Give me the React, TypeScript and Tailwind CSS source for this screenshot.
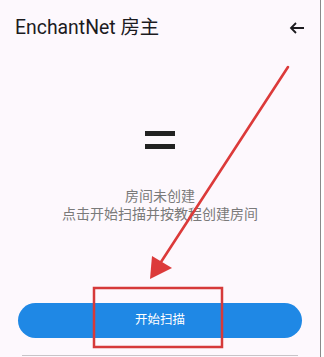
import React from "react";

export default function App() {
  return (
    <div className="relative w-[324px] h-[357px] overflow-hidden bg-white flex" style={{ fontFamily: 'Roboto, "Noto Sans CJK SC", sans-serif' }}>
      <div className="w-[321px] h-full bg-[#fdf8fd] border-r border-[#8a8a8a] flex flex-col">
        <div className="h-[56px] flex items-center justify-between pl-[15px] pr-[15px]">
          <span className="text-[19.4px] leading-none text-[#1c1b1f]">EnchantNet 房主</span>
          <svg width="16" height="16" viewBox="0 0 16 16">
            <path d="M15 8 H2 M7 3 L2 8 L7 13" fill="none" stroke="#1c1b1f" strokeWidth="1.8" />
          </svg>
        </div>
        <div className="flex flex-col items-center">
          <div className="mt-[75px] w-[30px] flex flex-col gap-[8px]">
            <div className="h-[5px] bg-[#222222]" />
            <div className="h-[5px] bg-[#222222]" />
          </div>
          <div className="mt-[38px] text-center text-[14px] leading-[18px] text-[#7a7a7a]">
            <div>房间未创建</div>
            <div>点击开始扫描并按教程创建房间</div>
          </div>
        </div>
        <button className="mt-[80px] mx-[18px] h-[35px] rounded-full bg-[#1f88e5] text-white text-[12.5px] flex items-center justify-center">
          开始扫描
        </button>
        <div className="mt-[17px] mx-[22px] h-px bg-[#c8c4c8]" />
      </div>
      <svg className="absolute inset-0 pointer-events-none" width="324" height="357" viewBox="0 0 324 357">
        <line x1="288" y1="67" x2="161" y2="262" stroke="#dc3a3a" strokeWidth="2.6" strokeLinecap="round" />
        <polygon points="150,279 152,256 172,268" fill="#dc3a3a" />
        <rect x="94" y="288" width="128" height="59" fill="none" stroke="#d63a3a" strokeWidth="2.5" />
      </svg>
    </div>
  );
}
